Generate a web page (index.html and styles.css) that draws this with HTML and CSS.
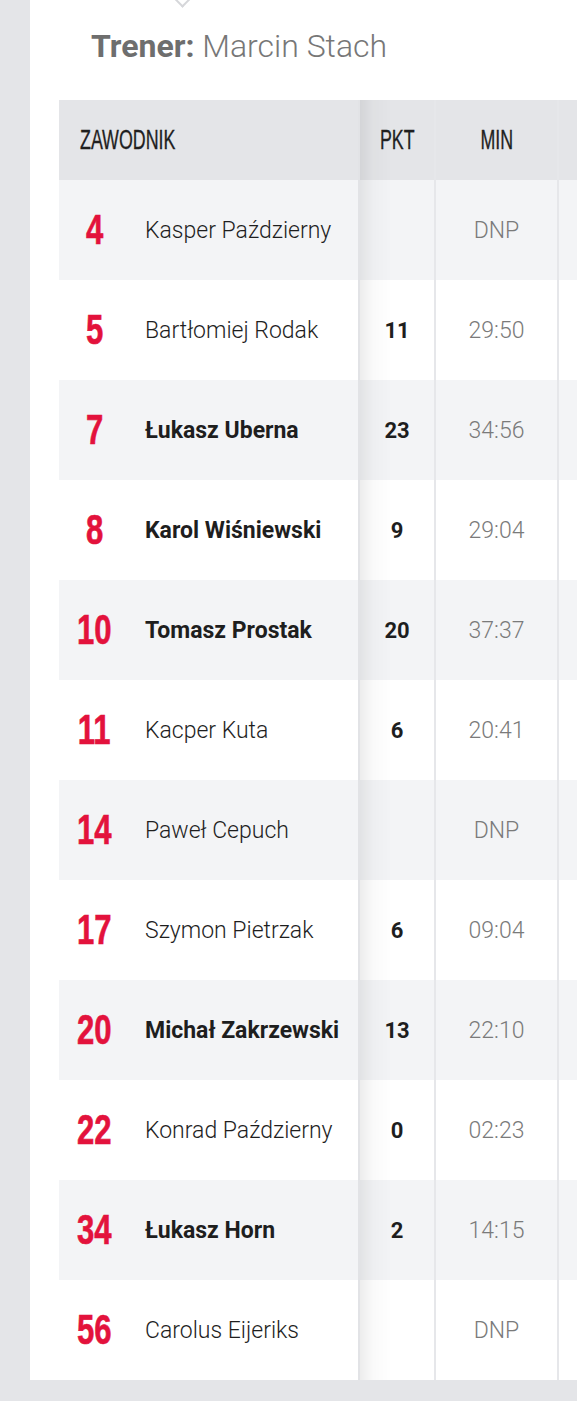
FILE: index.html
```html
<!DOCTYPE html>
<html lang="pl">
<head>
<meta charset="utf-8">
<title>Skład</title>
<link rel="stylesheet" href="styles.css">
</head>
<body>
<div class="card">
  <h2 class="coach"><span class="coach-label">Trener:</span> Marcin Stach</h2>
  <table class="stats">
    <colgroup>
      <col class="c-num"><col class="c-name"><col class="c-pkt"><col class="c-min"><col class="c-next">
    </colgroup>
    <thead>
      <tr>
        <th class="h-player" colspan="2"><span class="cond cond-left">ZAWODNIK</span></th>
        <th class="pkt"><span class="cond">PKT</span></th>
        <th class="min"><span class="cond">MIN</span></th>
        <th class="next"></th>
      </tr>
    </thead>
    <tbody>
      <tr><td class="num"><span>4</span></td><td class="name">Kasper Październy</td><td class="pkt"></td><td class="min">DNP</td><td class="next"></td></tr>
      <tr><td class="num"><span>5</span></td><td class="name">Bartłomiej Rodak</td><td class="pkt">11</td><td class="min">29:50</td><td class="next"></td></tr>
      <tr><td class="num"><span>7</span></td><td class="name starter">Łukasz Uberna</td><td class="pkt">23</td><td class="min">34:56</td><td class="next"></td></tr>
      <tr><td class="num"><span>8</span></td><td class="name starter">Karol Wiśniewski</td><td class="pkt">9</td><td class="min">29:04</td><td class="next"></td></tr>
      <tr><td class="num"><span>10</span></td><td class="name starter">Tomasz Prostak</td><td class="pkt">20</td><td class="min">37:37</td><td class="next"></td></tr>
      <tr><td class="num"><span>11</span></td><td class="name">Kacper Kuta</td><td class="pkt">6</td><td class="min">20:41</td><td class="next"></td></tr>
      <tr><td class="num"><span>14</span></td><td class="name">Paweł Cepuch</td><td class="pkt"></td><td class="min">DNP</td><td class="next"></td></tr>
      <tr><td class="num"><span>17</span></td><td class="name">Szymon Pietrzak</td><td class="pkt">6</td><td class="min">09:04</td><td class="next"></td></tr>
      <tr><td class="num"><span>20</span></td><td class="name starter">Michał Zakrzewski</td><td class="pkt">13</td><td class="min">22:10</td><td class="next"></td></tr>
      <tr><td class="num"><span>22</span></td><td class="name">Konrad Październy</td><td class="pkt">0</td><td class="min">02:23</td><td class="next"></td></tr>
      <tr><td class="num"><span>34</span></td><td class="name starter">Łukasz Horn</td><td class="pkt">2</td><td class="min">14:15</td><td class="next"></td></tr>
      <tr><td class="num"><span>56</span></td><td class="name">Carolus Eijeriks</td><td class="pkt"></td><td class="min">DNP</td><td class="next"></td></tr>
    </tbody>
  </table>
</div>
</body>
</html>
```

FILE: styles.css
```css
html, body {
  margin: 0;
  padding: 0;
}

body {
  background: #e4e5e8;
  width: 577px;
  height: 1401px;
  overflow: hidden;
  padding-left: 30px;
  box-sizing: border-box;
  font-family: Roboto, "Liberation Sans", sans-serif;
}

.card {
  position: relative;
  background: #ffffff;
  width: 547px;
  overflow: hidden;
  padding-left: 29px;
  box-sizing: border-box;
}

.coach {
  position: relative;
  margin: 0;
  height: 100px;
  box-sizing: border-box;
  padding: 26px 0 0 32px;
  font-size: 32px;
  line-height: 40px;
  font-weight: 300;
  color: #777777;
}

.coach::before {
  content: "";
  position: absolute;
  left: 117px;
  top: -8px;
  width: 11px;
  height: 11px;
  border-right: 2px solid #d6d7da;
  border-bottom: 2px solid #d6d7da;
  transform: rotate(45deg);
}

.coach-label {
  font-weight: 700;
  color: #6e6e6e;
}

.stats {
  border-collapse: collapse;
  table-layout: fixed;
  width: 691px;
}

.c-num { width: 71px; }
.c-name { width: 229px; }
.c-pkt { width: 76px; }
.c-min { width: 123px; }
.c-next { width: 192px; }

.stats th {
  height: 80px;
  padding: 0;
  background: #e4e5e8;
  font-family: "Liberation Sans", Arial, sans-serif;
  font-weight: 400;
  font-size: 27px;
  color: #1f1f1f;
  text-align: center;
  vertical-align: middle;
  white-space: nowrap;
}

.cond {
  display: inline-block;
  transform: scaleX(0.66);
  -webkit-text-stroke: 0.35px #1f1f1f;
}

.cond-left {
  transform-origin: left center;
}

.stats th.h-player {
  text-align: left;
  padding-left: 21px;
}

.stats td {
  height: 100px;
  padding: 0;
  vertical-align: middle;
  text-align: center;
}

.stats tbody tr:nth-child(odd) td {
  background-color: #f3f4f6;
}

.stats tbody tr:nth-child(even) td {
  background-color: #ffffff;
}

.stats .pkt {
  border-left: 2px solid #e2e3e6;
  background-image: linear-gradient(to right, rgba(0, 0, 0, 0.07), rgba(0, 0, 0, 0.02) 14px, rgba(0, 0, 0, 0) 32px);
}

.stats .min {
  border-left: 2px solid #e6e7ea;
}

.stats .next {
  border-left: 2px solid #e6e7ea;
}

.stats td.num {
  font-family: "Liberation Sans", Arial, sans-serif;
  font-weight: 700;
  font-size: 42px;
  color: #e3123c;
  white-space: nowrap;
}

.num span {
  display: inline-block;
  transform: scaleX(0.74);
  -webkit-text-stroke: 0.6px #e3123c;
}

.stats td.name {
  text-align: left;
  padding-left: 15px;
  font-size: 23px;
  font-weight: 300;
  color: #1e1e1e;
  white-space: nowrap;
}

.stats td.name.starter {
  font-weight: 700;
  font-size: 23px;
}

.stats td.pkt {
  font-size: 22px;
  font-weight: 700;
  color: #1e1e1e;
}

.stats td.min {
  font-size: 23px;
  font-weight: 300;
  color: #7a7a7a;
}
```
